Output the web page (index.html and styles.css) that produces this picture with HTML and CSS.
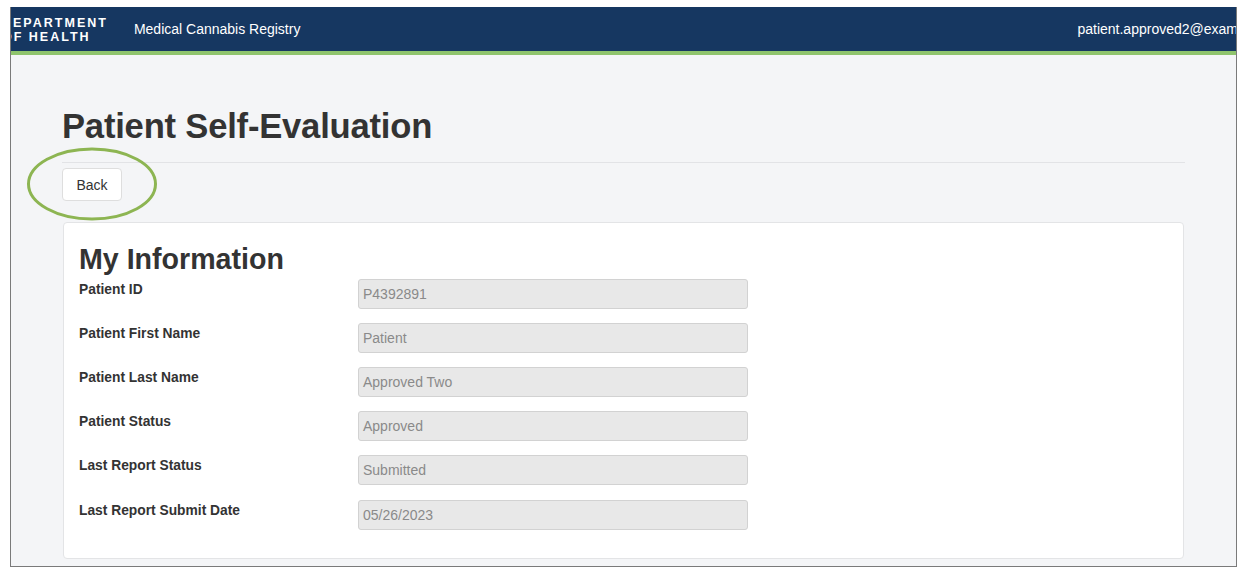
FILE: index.html
```html
<!DOCTYPE html>
<html lang="en">
<head>
<meta charset="utf-8">
<title>Patient Self-Evaluation</title>
<link rel="stylesheet" href="styles.css">
</head>
<body>
<div class="frame">
  <header class="navbar">
    <div class="logo">
      <span>DEPARTMENT</span>
      <span>OF HEALTH</span>
    </div>
    <div class="brand">Medical Cannabis Registry</div>
    <div class="user">patient.approved2@example.com</div>
  </header>
  <main class="page">
    <h1 class="title">Patient Self-Evaluation</h1>
    <hr class="rule">
    <div class="back-wrap">
      <button class="btn">Back</button>
      <svg class="ring" width="134" height="76" viewBox="0 0 134 76" aria-hidden="true">
        <ellipse cx="67" cy="38" rx="63.5" ry="35" fill="none" stroke="#8db552" stroke-width="3"/>
      </svg>
    </div>
    <section class="card">
      <h2 class="card-title">My Information</h2>
      <div class="rows">
        <div class="row"><label class="lbl">Patient ID</label><div class="field">P4392891</div></div>
        <div class="row"><label class="lbl">Patient First Name</label><div class="field">Patient</div></div>
        <div class="row"><label class="lbl">Patient Last Name</label><div class="field">Approved Two</div></div>
        <div class="row"><label class="lbl">Patient Status</label><div class="field">Approved</div></div>
        <div class="row"><label class="lbl">Last Report Status</label><div class="field">Submitted</div></div>
        <div class="row row-last"><label class="lbl">Last Report Submit Date</label><div class="field">05/26/2023</div></div>
      </div>
    </section>
  </main>
</div>
</body>
</html>
```
FILE: styles.css
```css
html, body {
  margin: 0;
  padding: 0;
  background: #ffffff;
}
body {
  font-family: "Liberation Sans", Arial, sans-serif;
  color: #333333;
}
.frame {
  margin: 7px 0 0 10px;
  width: 1225px;
  height: 559px;
  border-left: 1px solid #7a7a7a;
  border-right: 1px solid #7a7a7a;
  border-bottom: 1px solid #7a7a7a;
  background: #f4f5f7;
  overflow: hidden;
}
.navbar {
  height: 44px;
  background: #163761;
  border-bottom: 4px solid #8fc46d;
  display: flex;
  align-items: center;
  color: #ffffff;
  white-space: nowrap;
}
.logo {
  display: flex;
  flex-direction: column;
  margin-left: -9px;
  padding-top: 2px;
  font-weight: bold;
  font-size: 12.5px;
  letter-spacing: 2px;
  line-height: 14px;
  flex: none;
}
.brand {
  margin-left: 26px;
  font-size: 14px;
  flex: none;
}
.user {
  margin-left: auto;
  margin-right: -51px;
  font-size: 14px;
  flex: none;
}
.page {
  padding: 51px 51px 0 51px;
}
.title {
  margin: 0;
  font-size: 34.6px;
  font-weight: bold;
  line-height: 40px;
  color: #333333;
  letter-spacing: -0.2px;
}
.rule {
  margin: 16px 0 0 0;
  border: 0;
  border-top: 1px solid #e2e3e6;
}
.back-wrap {
  position: relative;
  margin-top: 5px;
  height: 33px;
}
.btn {
  height: 33px;
  width: 60px;
  padding: 0;
  background: #ffffff;
  border: 1px solid #dedede;
  border-radius: 4px;
  font-family: "Liberation Sans", Arial, sans-serif;
  font-size: 14px;
  color: #333333;
}
.ring {
  position: absolute;
  left: -37px;
  top: -22px;
}
.card {
  margin-top: 21px;
  margin-left: 1px;
  margin-right: 1px;
  background: #ffffff;
  border: 1px solid #e3e4e6;
  border-radius: 4px;
  padding: 17px 15px 28px 15px;
  height: 337px;
  box-sizing: border-box;
}
.card-title {
  margin: 0;
  font-size: 28.6px;
  font-weight: bold;
  line-height: 38px;
  color: #333333;
}
.rows {
  display: flex;
  flex-direction: column;
  gap: 14px;
  margin-top: 1px;
}
.row {
  display: grid;
  grid-template-columns: 279px 390px;
  align-items: start;
}
.row-last {
  margin-top: 1px;
}
.lbl {
  font-size: 13.8px;
  font-weight: bold;
  padding-top: 3px;
  color: #333333;
}
.field {
  height: 28px;
  line-height: 29px;
  box-sizing: content-box;
  background: #e8e8e8;
  border: 1px solid #d2d2d2;
  border-radius: 3px;
  padding: 0 4px;
  font-size: 14px;
  color: #8a8a8a;
}
```
